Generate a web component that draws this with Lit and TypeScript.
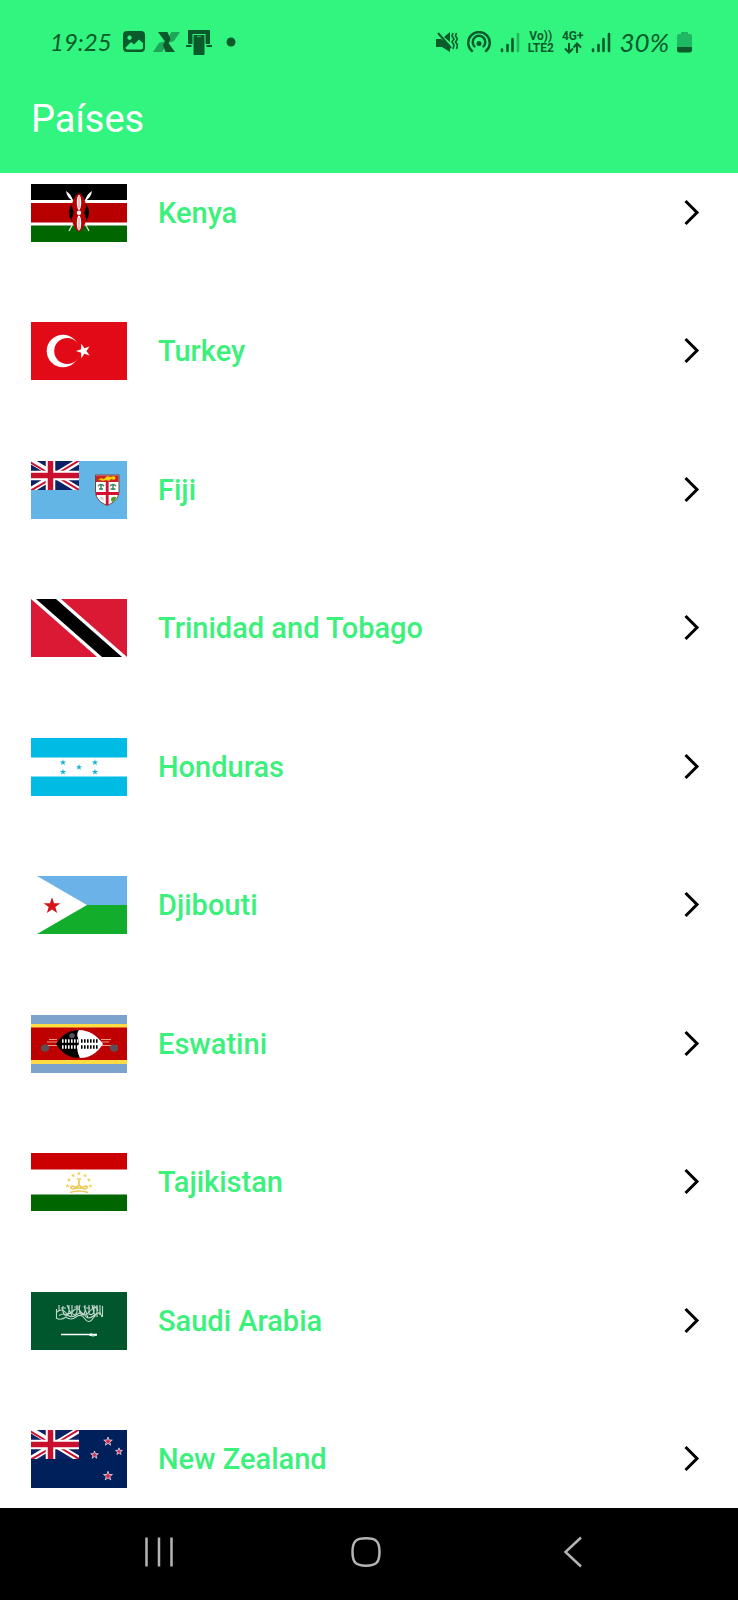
import { LitElement, html, css, svg, TemplateResult } from "lit";
import { customElement, property } from "lit/decorators.js";

/** Points of a five-pointed star centred on (cx, cy). */
function star(cx: number, cy: number, r: number, turn = -90): string {
  const pts: string[] = [];
  for (let i = 0; i < 10; i++) {
    const a = ((turn + i * 36) * Math.PI) / 180;
    const k = i % 2 ? r * 0.4 : r;
    pts.push(`${(cx + k * Math.cos(a)).toFixed(2)},${(cy + k * Math.sin(a)).toFixed(2)}`);
  }
  return pts.join(" ");
}

const unionJack = svg`
  <svg x="0" y="0" width="48" height="29" viewBox="0 0 48 29">
    <rect width="48" height="29" fill="#0b2265"></rect>
    <path d="M0 0L48 29M48 0L0 29" stroke="#fff" stroke-width="6"></path>
    <path d="M-1 1L24 16M48 29L24 14.500M49 -1L25 13.500M0 29.500L24 15.500" stroke="#c8102e" stroke-width="2"></path>
    <path d="M19.500 0V29M0 14.500H48" stroke="#fff" stroke-width="9.500"></path>
    <path d="M19.500 0V29M0 14.500H48" stroke="#c8102e" stroke-width="5.500"></path>
  </svg>`;

const flags: Record<string, TemplateResult> = {
  kenya: svg`
    <rect width="96" height="58" fill="#fff"></rect>
    <rect width="96" height="16" fill="#000"></rect>
    <rect y="19" width="96" height="19.500" fill="#b80000"></rect>
    <rect y="41.500" width="96" height="16.500" fill="#006600"></rect>
    <path d="M38 47L58 10M58 47L38 10" stroke="#e8e8e8" stroke-width="1.200"></path>
    <path d="M35 7q5 3 7 10q-6-3-7-10M61 7q-5 3-7 10q6-3 7-10" fill="#fff"></path>
    <ellipse cx="48" cy="28.500" rx="10" ry="12" fill="#000"></ellipse>
    <path d="M48 9c5 3 7 9 7 14-2 3-2 8 0 11 0 6-3 11-7 14-4-3-7-8-7-14 2-3 2-8 0-11 0-5 2-11 7-14z" fill="#b80000"></path>
    <ellipse cx="48" cy="18.500" rx="2.200" ry="7.500" fill="#fff"></ellipse>
    <ellipse cx="48" cy="39" rx="2.200" ry="7.500" fill="#fff"></ellipse>
    <circle cx="48" cy="28.800" r="2.200" fill="#fff"></circle>
    <path d="M48 12v12M48 34v12" stroke="#b80000" stroke-width=".5"></path>`,
  turkey: svg`
    <rect width="96" height="58" fill="#e30a17"></rect>
    <circle cx="32" cy="29" r="16.300" fill="#fff"></circle>
    <circle cx="36.200" cy="29" r="13" fill="#e30a17"></circle>
    <polygon points=${star(52.5, 29, 7.5, 180)} fill="#fff"></polygon>`,
  fiji: svg`
    <rect width="96" height="58" fill="#62b5e5"></rect>
    ${unionJack}
    <path d="M64.500 14H88v16c0 8-6 12-11.800 14.500C70 42 64.500 38 64.500 30z" fill="#fff" stroke="#6e4a3a" stroke-width="1"></path>
    <path d="M65 14.500H87.500V21H65z" fill="#cf2027"></path>
    <path d="M67 19l3-2 3 1 3-3 4 1 3-1 2 2-2 2-3-1-2 2-3-1-3 1-3-1z" fill="#ffd100" stroke="#b57b15" stroke-width=".5"></path>
    <path d="M76.200 21V44M65 32.500H87.800" stroke="#d21034" stroke-width="2.800"></path>
    <path d="M67 25q3-3 6 0M68 28h4M70 24v5M79 25q3-3 6 0M82 24v5M79.500 28h5" stroke="#3f7f5b" stroke-width="1.400" fill="none"></path>
    <path d="M68 37q2-2 5 0l-1 3z" fill="#cdd6d2"></path>
    <path d="M80 39q0-4 5-3q0 4-4 5z" fill="#4f9a28"></path>`,
  trinidad: svg`
    <rect width="96" height="58" fill="#da1a35"></rect>
    <path d="M0 0H30L96 58H66z" fill="#fff"></path>
    <path d="M5 0H25L91 58H71z" fill="#000"></path>`,
  honduras: svg`
    <rect width="96" height="58" fill="#fff"></rect>
    <rect width="96" height="19.500" fill="#00bce4"></rect>
    <rect y="38.500" width="96" height="19.500" fill="#00bce4"></rect>
    ${[[32, 24.500], [32, 34], [48, 29.200], [64, 24.500], [64, 34]].map(
      ([x, y]) => svg`<polygon points=${star(x, y, 3.3)} fill="#18b3d6"></polygon>`
    )}`,
  djibouti: svg`
    <rect width="96" height="58" fill="#fff"></rect>
    <path d="M6 0H96V29H56z" fill="#6ab2e7"></path>
    <path d="M6 58H96V29H56z" fill="#12ad2b"></path>
    <polygon points=${star(21, 30, 8.8)} fill="#d7141a"></polygon>`,
  eswatini: svg`
    <rect width="96" height="58" fill="#7ba3cc"></rect>
    <rect y="9" width="96" height="40" fill="#ffdc44"></rect>
    <rect y="12.500" width="96" height="32.500" fill="#bf0000"></rect>
    <path d="M16 27H78M12 30.500H86M18 24.500H26M70 24.500H80" stroke="#e59a86" stroke-width="1"></path>
    <path d="M10 31l5-2 4 3-2 4-4 1-3-2zM87 31l-5-2-4 3 2 4 4 1 3-2z" fill="#5d4d55"></path>
    <path d="M25 29Q34 15 48 15V43Q34 43 25 29z" fill="#000"></path>
    <path d="M72 29Q62 15 48 15q-3 4-1 8t0 8 2 12Q63 43 72 29z" fill="#fff"></path>
    <path d="M38 20q3-4 6 0l-1 3h-4z" fill="#55505a"></path>
    <path d="M31 26H48M31 32H48" stroke="#fff" stroke-width="3.400" stroke-dasharray="1.600 1.400"></path>
    <path d="M50 26H67M50 32H67" stroke="#000" stroke-width="3.400" stroke-dasharray="1.600 1.400"></path>`,
  tajikistan: svg`
    <rect width="96" height="58" fill="#fff"></rect>
    <rect width="96" height="16.500" fill="#cc0000"></rect>
    <rect y="41.500" width="96" height="16.500" fill="#006600"></rect>
    ${[[36.500, 33], [38, 27], [42, 22.500], [48, 20.500], [54, 22.500], [58, 27], [59.500, 33]].map(
      ([x, y]) => svg`<polygon points=${star(x, y, 2.3)} fill="#efcf5a"></polygon>`
    )}
    <path d="M39 39.500q9-3 18 0M41 36q-3-3 1-3 3 3 6-1 3 4 6 1 4 0 1 3M48 32v-5M46 26h4M41 36q7-2 14 0" fill="none" stroke="#ecc850" stroke-width="1.600"></path>`,
  saudi: svg`
    <rect width="96" height="58" fill="#00572d"></rect>
    <g fill="none" stroke="#c3d8cc" stroke-width="1.100">
      <path d="M25.500 17v9M28 13v6M32 14q-1 7 2 9t4-4v-6M36 13l5 11M41 13v8q3 4 5-1v-7M49 13q-2 6 1 9t4-3v-6M53 14l4 12M58 13v9q3 2 5-2v-7M66 13v12M69 13v10M71.500 14v11M61 13l3 12"></path>
      <path d="M25 26q5 3 10-1 5 4 10 0t9 2 9-2 8 0M26 20q5-4 8 0t8-1 8 1 9-1 8 0M28 23.500q5-3 9 0t9-1 8 1 9 0 7-1M30 16h5M43 15h6M55 16h4M63 15h4"></path>
    </g>
    <path d="M30 42.500H66" stroke="#fff" stroke-width="1.400"></path>
    <path d="M58 43q4 2 8 0M60 41v3" stroke="#fff" stroke-width="1" fill="none"></path>`,
  newzealand: svg`
    <rect width="96" height="58" fill="#00205b"></rect>
    ${unionJack}
    ${[[77, 11.500, 4.500], [63.500, 25, 4], [88, 21.500, 3.600], [77, 46, 4.700]].map(
      ([x, y, r]) => svg`<polygon points=${star(x, y, r)} fill="#d8294a" stroke="#e6dbe6" stroke-width=".8"></polygon>`
    )}`,
};

interface Country {
  name: string;
  flag: string;
}

const countries: Country[] = [
  { name: "Kenya", flag: "kenya" },
  { name: "Turkey", flag: "turkey" },
  { name: "Fiji", flag: "fiji" },
  { name: "Trinidad and Tobago", flag: "trinidad" },
  { name: "Honduras", flag: "honduras" },
  { name: "Djibouti", flag: "djibouti" },
  { name: "Eswatini", flag: "eswatini" },
  { name: "Tajikistan", flag: "tajikistan" },
  { name: "Saudi Arabia", flag: "saudi" },
  { name: "New Zealand", flag: "newzealand" },
];

@customElement("status-bar")
export class StatusBar extends LitElement {
  static styles = css`
    :host {
      display: flex;
      justify-content: space-between;
      align-items: center;
      height: 84px;
      padding: 0 46px 0 50px;
      color: #0b5a2b;
    }
    .group {
      display: flex;
      align-items: center;
      gap: 8px;
    }
    .apps {
      display: flex;
      align-items: center;
      gap: 5px;
    }
    .clock {
      font: italic 400 24px/32px Lato, "Open Sans", sans-serif;
    }
    .charge {
      font: italic 400 26px/32px Lato, "Open Sans", sans-serif;
    }
    .net {
      display: flex;
      flex-direction: column;
      align-items: center;
      font: 700 12px/12px Roboto, sans-serif;
    }
    svg {
      display: block;
      flex: none;
    }
  `;

  private signal(last: number) {
    return html`<svg width="20" height="22" viewBox="0 0 20 22" aria-hidden="true" stroke="currentColor" stroke-width="2.600" stroke-linecap="round">
      <path d="M2 18.500V20M7.500 14V20M12.500 8V20"></path>
      <path d="M18 3V20" opacity=${last}></path>
    </svg>`;
  }

  render() {
    return html`
      <div class="group">
        <span class="clock">19:25</span>
        <div class="apps">
          <svg width="28" height="24" viewBox="0 0 28 24" aria-hidden="true">
            <path fill="currentColor" fill-rule="evenodd" d="M7 1H21a4 4 0 0 1 4 4V18a4 4 0 0 1-4 4H7a4 4 0 0 1-4-4V5a4 4 0 0 1 4-4zM9.500 5.500a2.200 2.200 0 1 0 .1 0zM5.500 17.500q0 2 2 2H21q2 0 2-2V13l-4-3.500-5 5-3-2.500z"></path>
          </svg>
          <svg width="27" height="22" viewBox="0 0 27 22" aria-hidden="true">
            <path fill="#1fa759" d="M18.500 1H27L21 10 15 12 9 21H0L6 12 13 10z"></path>
            <path fill="currentColor" d="M5 1H14.500L17.500 8 15.500 12 22 21H12.500L10 14 12 10.500z"></path>
          </svg>
          <svg width="28" height="26" viewBox="0 0 28 26" aria-hidden="true">
            <path fill="currentColor" d="M3 1H25V15H20.500V5H7.500V15H3zM1 16H6.500V18H1zM21.500 16H27V18H21.500z"></path>
            <rect x="8.500" y="6" width="11" height="20" rx="1" fill="currentColor"></rect>
            <path d="M12 7.500h4" stroke="#1fa759" stroke-width="1.500"></path>
          </svg>
          <svg width="24" height="10" viewBox="0 0 24 10" aria-hidden="true"><circle cx="13" cy="5" r="4.500" fill="currentColor"></circle></svg>
        </div>
      </div>
      <div class="group">
        <svg width="22" height="22" viewBox="0 0 22 22" aria-hidden="true">
          <path fill="currentColor" d="M0 8H5L14 14V21L6 16H0zM8 6L14 1V11z"></path>
          <path d="M2 2L15 17" stroke="currentColor" stroke-width="2"></path>
          <path d="M17 2l-1 3 2 3-2 3 2 3-1 4M20.500 2l-1 3 2 3-2 3 2 3-1 4" fill="none" stroke="currentColor" stroke-width="1.600"></path>
        </svg>
        <svg width="26" height="22" viewBox="0 0 26 22" aria-hidden="true" fill="none" stroke="currentColor" stroke-width="2.400" stroke-linecap="round">
          <path d="M6 20A10.800 10.800 0 1 1 20 20M8.500 15.500A6.300 6.300 0 1 1 17.500 15.500"></path>
          <circle cx="13" cy="12.500" r="1.300" fill="currentColor"></circle>
        </svg>
        ${this.signal(0.4)}
        <span class="net"><span>Vo))</span><span>LTE2</span></span>
        <span class="net"><span>4G+</span>
          <svg width="18" height="12" viewBox="0 0 18 12" aria-hidden="true" fill="none" stroke="currentColor" stroke-width="2">
            <path d="M5 1V10M1 6.500L5 10.500 9 6.500M13 11V2M9.500 5.500L13 1.500 17 5.500"></path>
          </svg>
        </span>
        ${this.signal(1)}
        <span class="charge">30%</span>
        <svg width="15" height="22" viewBox="0 0 15 22" aria-hidden="true">
          <path fill="#1fb963" d="M4 1H11V3H13Q15 3 15 5V16H0V5Q0 3 2 3H4z"></path>
          <path fill="currentColor" d="M0 16H15V19Q15 21.500 12.500 21.500H2.500Q0 21.500 0 19z"></path>
        </svg>
      </div>
    `;
  }
}

@customElement("country-row")
export class CountryRow extends LitElement {
  @property({ attribute: false }) country!: Country;

  static styles = css`
    :host {
      display: block;
    }
    .row {
      display: flex;
      align-items: center;
      gap: 31px;
      padding: 0 38px 0 31px;
      color: #3cf07c;
      text-decoration: none;
      font: 500 29px/34px Roboto, sans-serif;
    }
    .flag {
      display: block;
      flex: none;
      width: 96px;
      height: 58px;
    }
    .name {
      flex: 1;
    }
    .chevron {
      display: block;
      flex: none;
    }
  `;

  render() {
    return html`
      <a class="row" href="#${this.country.flag}">
        <svg class="flag" viewBox="0 0 96 58" aria-hidden="true">${flags[this.country.flag]}</svg>
        <span class="name">${this.country.name}</span>
        <svg class="chevron" width="18" height="28" viewBox="0 0 18 28" aria-hidden="true">
          <path d="M3.500 2L15 13.500 3.500 25" fill="none" stroke="#000" stroke-width="3"></path>
        </svg>
      </a>
    `;
  }
}

@customElement("app-root")
export class AppRoot extends LitElement {
  static styles = css`
    :host {
      display: flex;
      flex-direction: column;
      min-height: 100vh;
      background: #fff;
      font-family: Roboto, sans-serif;
    }
    .header {
      height: 173px;
      background: #32f580;
    }
    .title {
      margin: 0;
      padding: 12px 31px 0;
      color: #fff;
      font: 400 38px/46px Roboto, sans-serif;
    }
    .main {
      flex: 1;
      display: flex;
    }
    .list {
      flex: 1;
      display: flex;
      flex-direction: column;
      justify-content: space-between;
      gap: 16px;
      margin: 0;
      padding: 11px 0 20px;
      list-style: none;
    }
    .nav {
      display: grid;
      grid-template-columns: repeat(3, 1fr);
      height: 92px;
      padding: 0 62px 0 56px;
      box-sizing: border-box;
      background: #000;
    }
    .key {
      display: flex;
      align-items: center;
      justify-content: center;
      padding: 0 0 4px;
      border: 0;
      background: none;
      color: #b4b4b4;
    }
  `;

  render() {
    return html`
      <header class="header">
        <status-bar></status-bar>
        <h1 class="title">Países</h1>
      </header>
      <main class="main">
        <ul class="list">
          ${countries.map((c) => html`<li><country-row .country=${c}></country-row></li>`)}
        </ul>
      </main>
      <nav class="nav">
        <button class="key" aria-label="Recientes">
          <svg width="30" height="32" viewBox="0 0 30 32" fill="none" stroke="currentColor" stroke-width="2.500"><path d="M2.500 1.500V30.500M15 1.500V30.500M27.500 1.500V30.500"></path></svg>
        </button>
        <button class="key" aria-label="Inicio">
          <svg width="32" height="32" viewBox="0 0 32 32" fill="none" stroke="currentColor" stroke-width="2.500"><path d="M16 2.300C26 2.300 29.500 5 29.500 16S26 29.700 16 29.700 2.500 27 2.500 16 6 2.300 16 2.300z"></path></svg>
        </button>
        <button class="key" aria-label="Atrás">
          <svg width="20" height="32" viewBox="0 0 20 32" fill="none" stroke="currentColor" stroke-width="2.500"><path d="M18 1.500L2.500 16 18 30.500"></path></svg>
        </button>
      </nav>
    `;
  }
}
